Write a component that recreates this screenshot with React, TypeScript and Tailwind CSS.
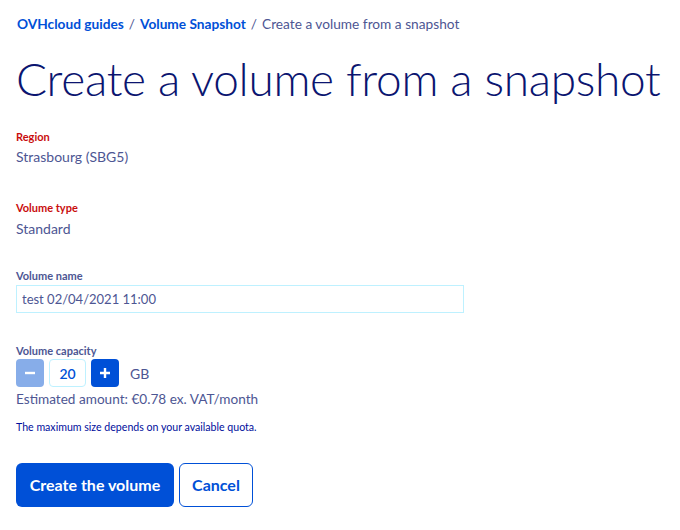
export default function App() {
  return (
    <div className="min-h-screen bg-white px-4 font-['Lato','Liberation_Sans',sans-serif] text-[#4d5693]">
      {/* Breadcrumb */}
      <nav className="flex items-center gap-[5px] pl-px pt-[14px] text-[13.7px] leading-5">
        <a className="font-bold text-[#0050d7]">OVHcloud guides</a>
        <span>/</span>
        <a className="font-bold text-[#0050d7]">Volume Snapshot</a>
        <span>/</span>
        <span>Create a volume from a snapshot</span>
      </nav>

      <h1 className="mt-[16px] whitespace-nowrap text-[46px] font-light leading-[58px] tracking-[-0.3px] text-[#0b1570]">
        Create a volume from a snapshot
      </h1>

      <div className="mt-[22px] text-[11px] font-bold leading-[14px] text-[#c90d0d]">Region</div>
      <div className="mt-[3px] text-[14px] leading-5">Strasbourg (SBG5)</div>

      <div className="mt-[34px] text-[11px] font-bold leading-[14px] text-[#c90d0d]">Volume type</div>
      <div className="mt-[4px] text-[14px] leading-5">Standard</div>

      <label className="mt-[30px] block text-[11px] font-bold leading-[14px]">Volume name</label>
      <input
        readOnly
        value="test 02/04/2021 11:00"
        className="mt-[2px] block h-[28px] w-[448px] border border-[#bef1ff] px-[5px] text-[13px] text-[#4d5693] outline-none"
      />

      <label className="mt-[31px] block text-[11px] font-bold leading-[14px]">Volume capacity</label>
      <div className="mt-px flex items-center">
        <button className="flex h-[28px] w-[28px] items-center justify-center rounded-[4px] bg-[#87ade9]">
          <svg width="12" height="12" viewBox="0 0 12 12">
            <path d="M1 6h10" stroke="white" strokeWidth="2.4" />
          </svg>
        </button>
        <div className="ml-[5px] flex h-[28px] w-[37px] items-center justify-center rounded-[4px] border border-[#bef1ff] text-[14px] font-semibold text-[#0050d7]">
          20
        </div>
        <button className="ml-[5px] flex h-[28px] w-[28px] items-center justify-center rounded-[4px] bg-[#0050d7]">
          <svg width="12" height="12" viewBox="0 0 12 12">
            <path d="M1 6h10M6 1v10" stroke="white" strokeWidth="2.4" />
          </svg>
        </button>
        <span className="ml-[11px] text-[14px]">GB</span>
      </div>
      <div className="mt-[2px] text-[13.6px] leading-5">Estimated amount: €0.78 ex. VAT/month</div>

      <p className="mt-[11px] text-[10.6px] leading-[14px] text-[#000e9c]">
        The maximum size depends on your available quota.
      </p>

      <div className="mt-[29px] flex gap-[5px]">
        <button className="h-[44px] w-[158px] rounded-[6px] bg-[#0050d7] text-[16px] font-bold text-white">
          Create the volume
        </button>
        <button className="h-[44px] w-[74px] rounded-[6px] border border-[#0050d7] bg-white text-[16px] font-bold text-[#0050d7]">
          Cancel
        </button>
      </div>
    </div>
  )
}
